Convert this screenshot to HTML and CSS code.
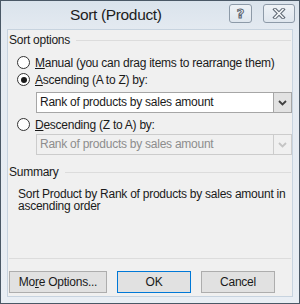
FILE: index.html
```html
<!DOCTYPE html>
<html>
<head>
<meta charset="utf-8">
<link rel="stylesheet" href="styles.css">
</head>
<body>
<div class="window">
  <div class="titlebar">
    <div class="title">Sort (Product)</div>
    <div class="tbtn help">?</div>
    <div class="tbtn close">
      <svg width="14" height="11" viewBox="0 0 14 11">
        <path d="M3 1.5 L11 9.5 M11 1.5 L3 9.5" stroke="#5a6470" stroke-width="3.6" stroke-linecap="square" fill="none"/>
        <path d="M3 1.5 L11 9.5 M11 1.5 L3 9.5" stroke="#f4f6f8" stroke-width="1.6" stroke-linecap="square" fill="none"/>
      </svg>
    </div>
  </div>
  <div class="client">
    <div class="group-head first"><span>Sort options</span><div class="rule"></div></div>
    <div class="radio-row"><span class="radio"></span><span><u>M</u>anual (you can drag items to rearrange them)</span></div>
    <div class="radio-row"><span class="radio checked"></span><span><u>A</u>scending (A to Z) by:</span></div>
    <div class="combo"><span class="combo-text">Rank of products by sales amount</span><span class="combo-btn"><svg width="9" height="6" viewBox="0 0 9 6"><path d="M1 1 L4.5 4.5 L8 1" stroke="#404040" stroke-width="1.8" fill="none"/></svg></span></div>
    <div class="radio-row desc"><span class="radio"></span><span><u>D</u>escending (Z to A) by:</span></div>
    <div class="combo disabled"><span class="combo-text">Rank of products by sales amount</span><span class="combo-btn"><svg width="9" height="6" viewBox="0 0 9 6"><path d="M1 1 L4.5 4.5 L8 1" stroke="#c4c4c4" stroke-width="1.8" fill="none"/></svg></span></div>
    <div class="group-head summary"><span>Summary</span><div class="rule"></div></div>
    <div class="summary-text">Sort Product by Rank of products by sales amount in ascending order</div>
    <div class="spacer"></div>
    <div class="sep"></div>
    <div class="buttons">
      <div class="btn more">Mo<u>r</u>e Options...</div>
      <div class="btn ok">OK</div>
      <div class="btn cancel">Cancel</div>
    </div>
  </div>
</div>
</body>
</html>
```

FILE: styles.css
```css
html, body {
  margin: 0;
  padding: 0;
  background: #ffffff;
}
body {
  font-family: "Liberation Sans", Arial, sans-serif;
  font-size: 12px;
  letter-spacing: -0.25px;
  color: #000;
}
.window {
  width: 300px;
  height: 304px;
  box-sizing: border-box;
  border: 1px solid #4a5866;
  background: linear-gradient(#dae3ec, #e4eaf1 30px, #e9eef4);
  display: flex;
  flex-direction: column;
}
.titlebar {
  height: 28px;
  display: flex;
  align-items: flex-start;
  position: relative;
}
.title {
  font-size: 15.5px;
  letter-spacing: -0.35px;
  color: #1c1c1c;
  margin-left: 69px;
  margin-top: 5px;
  width: 159px;
}
.tbtn {
  box-sizing: border-box;
  height: 19px;
  margin-top: 3px;
  border: 1px solid #8d9aa8;
  border-radius: 3px;
  background: linear-gradient(#eef2f6, #dfe6ee);
  display: flex;
  align-items: center;
  justify-content: center;
}
.help {
  width: 23px;
  font-size: 13px;
  font-weight: bold;
  letter-spacing: 0;
  color: #f4f6f8;
  -webkit-text-stroke: 1px #5a6470;
  font-family: "DejaVu Sans", sans-serif;
}
.close {
  width: 32px;
  margin-left: 11px;
}
.client {
  flex: 1;
  margin: 0 6px 6px 6px;
  border: 1px solid #c7d3df;
  background: #f0f0f0;
  padding: 0 0 0 1px;
  display: flex;
  flex-direction: column;
}
.group-head {
  height: 14px;
  line-height: 14px;
  display: flex;
  align-items: center;
  gap: 6px;
  color: #1a1a1a;
}
.group-head.first {
  margin-top: 3px;
}
.group-head.summary {
  margin-top: 10px;
}
.rule {
  flex: 1;
  height: 1px;
  background: #dcdcdc;
  margin-right: 1px;
}
.radio-row {
  height: 17px;
  display: flex;
  align-items: center;
  padding-left: 8px;
  gap: 5px;
  color: #1a1a1a;
}
.radio-row:nth-of-type(2) {
  margin-top: 7px;
}
.radio-row.desc {
  margin-top: 3px;
}
.radio {
  width: 13px;
  height: 13px;
  box-sizing: border-box;
  border: 1px solid #333;
  border-radius: 50%;
  background: #fff;
  display: flex;
  align-items: center;
  justify-content: center;
}
.radio.checked::after {
  content: "";
  width: 6px;
  height: 6px;
  border-radius: 50%;
  background: #1a1a1a;
}
.combo {
  margin-left: 27px;
  height: 21px;
  box-sizing: border-box;
  border: 1px solid #a6a6a6;
  background: #fff;
  display: flex;
  align-items: stretch;
  margin-top: 4px;
}
.combo.disabled {
  margin-top: 1px;
  border-color: #cccccc;
  background: #f0f0f0;
}
.combo-text {
  flex: 1;
  padding-left: 3px;
  line-height: 19px;
  color: #1a1a1a;
}
.combo.disabled .combo-text {
  color: #8d8d8d;
}
.combo-btn {
  width: 17px;
  background: #e2e2e2;
  border-left: 1px solid #a6a6a6;
  display: flex;
  align-items: center;
  justify-content: center;
}
.combo.disabled .combo-btn {
  background: #f0f0f0;
  border-left-color: #cccccc;
}
.summary-text {
  margin-top: 9px;
  padding-left: 9px;
  line-height: 12px;
  color: #1a1a1a;
  width: 275px;
}
.spacer {
  flex: 1;
}
.sep {
  height: 1px;
  background: #dcdcdc;
  margin-right: 1px;
}
.buttons {
  display: flex;
  margin-top: 12px;
  margin-bottom: 3px;
}
.btn {
  height: 22px;
  box-sizing: border-box;
  border: 1px solid #adadad;
  background: #e1e1e1;
  display: flex;
  align-items: center;
  justify-content: center;
  color: #1a1a1a;
}
.more {
  width: 98px;
}
.ok {
  width: 74px;
  margin-left: 10px;
  border-color: #0078d7;
}
.cancel {
  width: 74px;
  margin-left: 10px;
}
```
